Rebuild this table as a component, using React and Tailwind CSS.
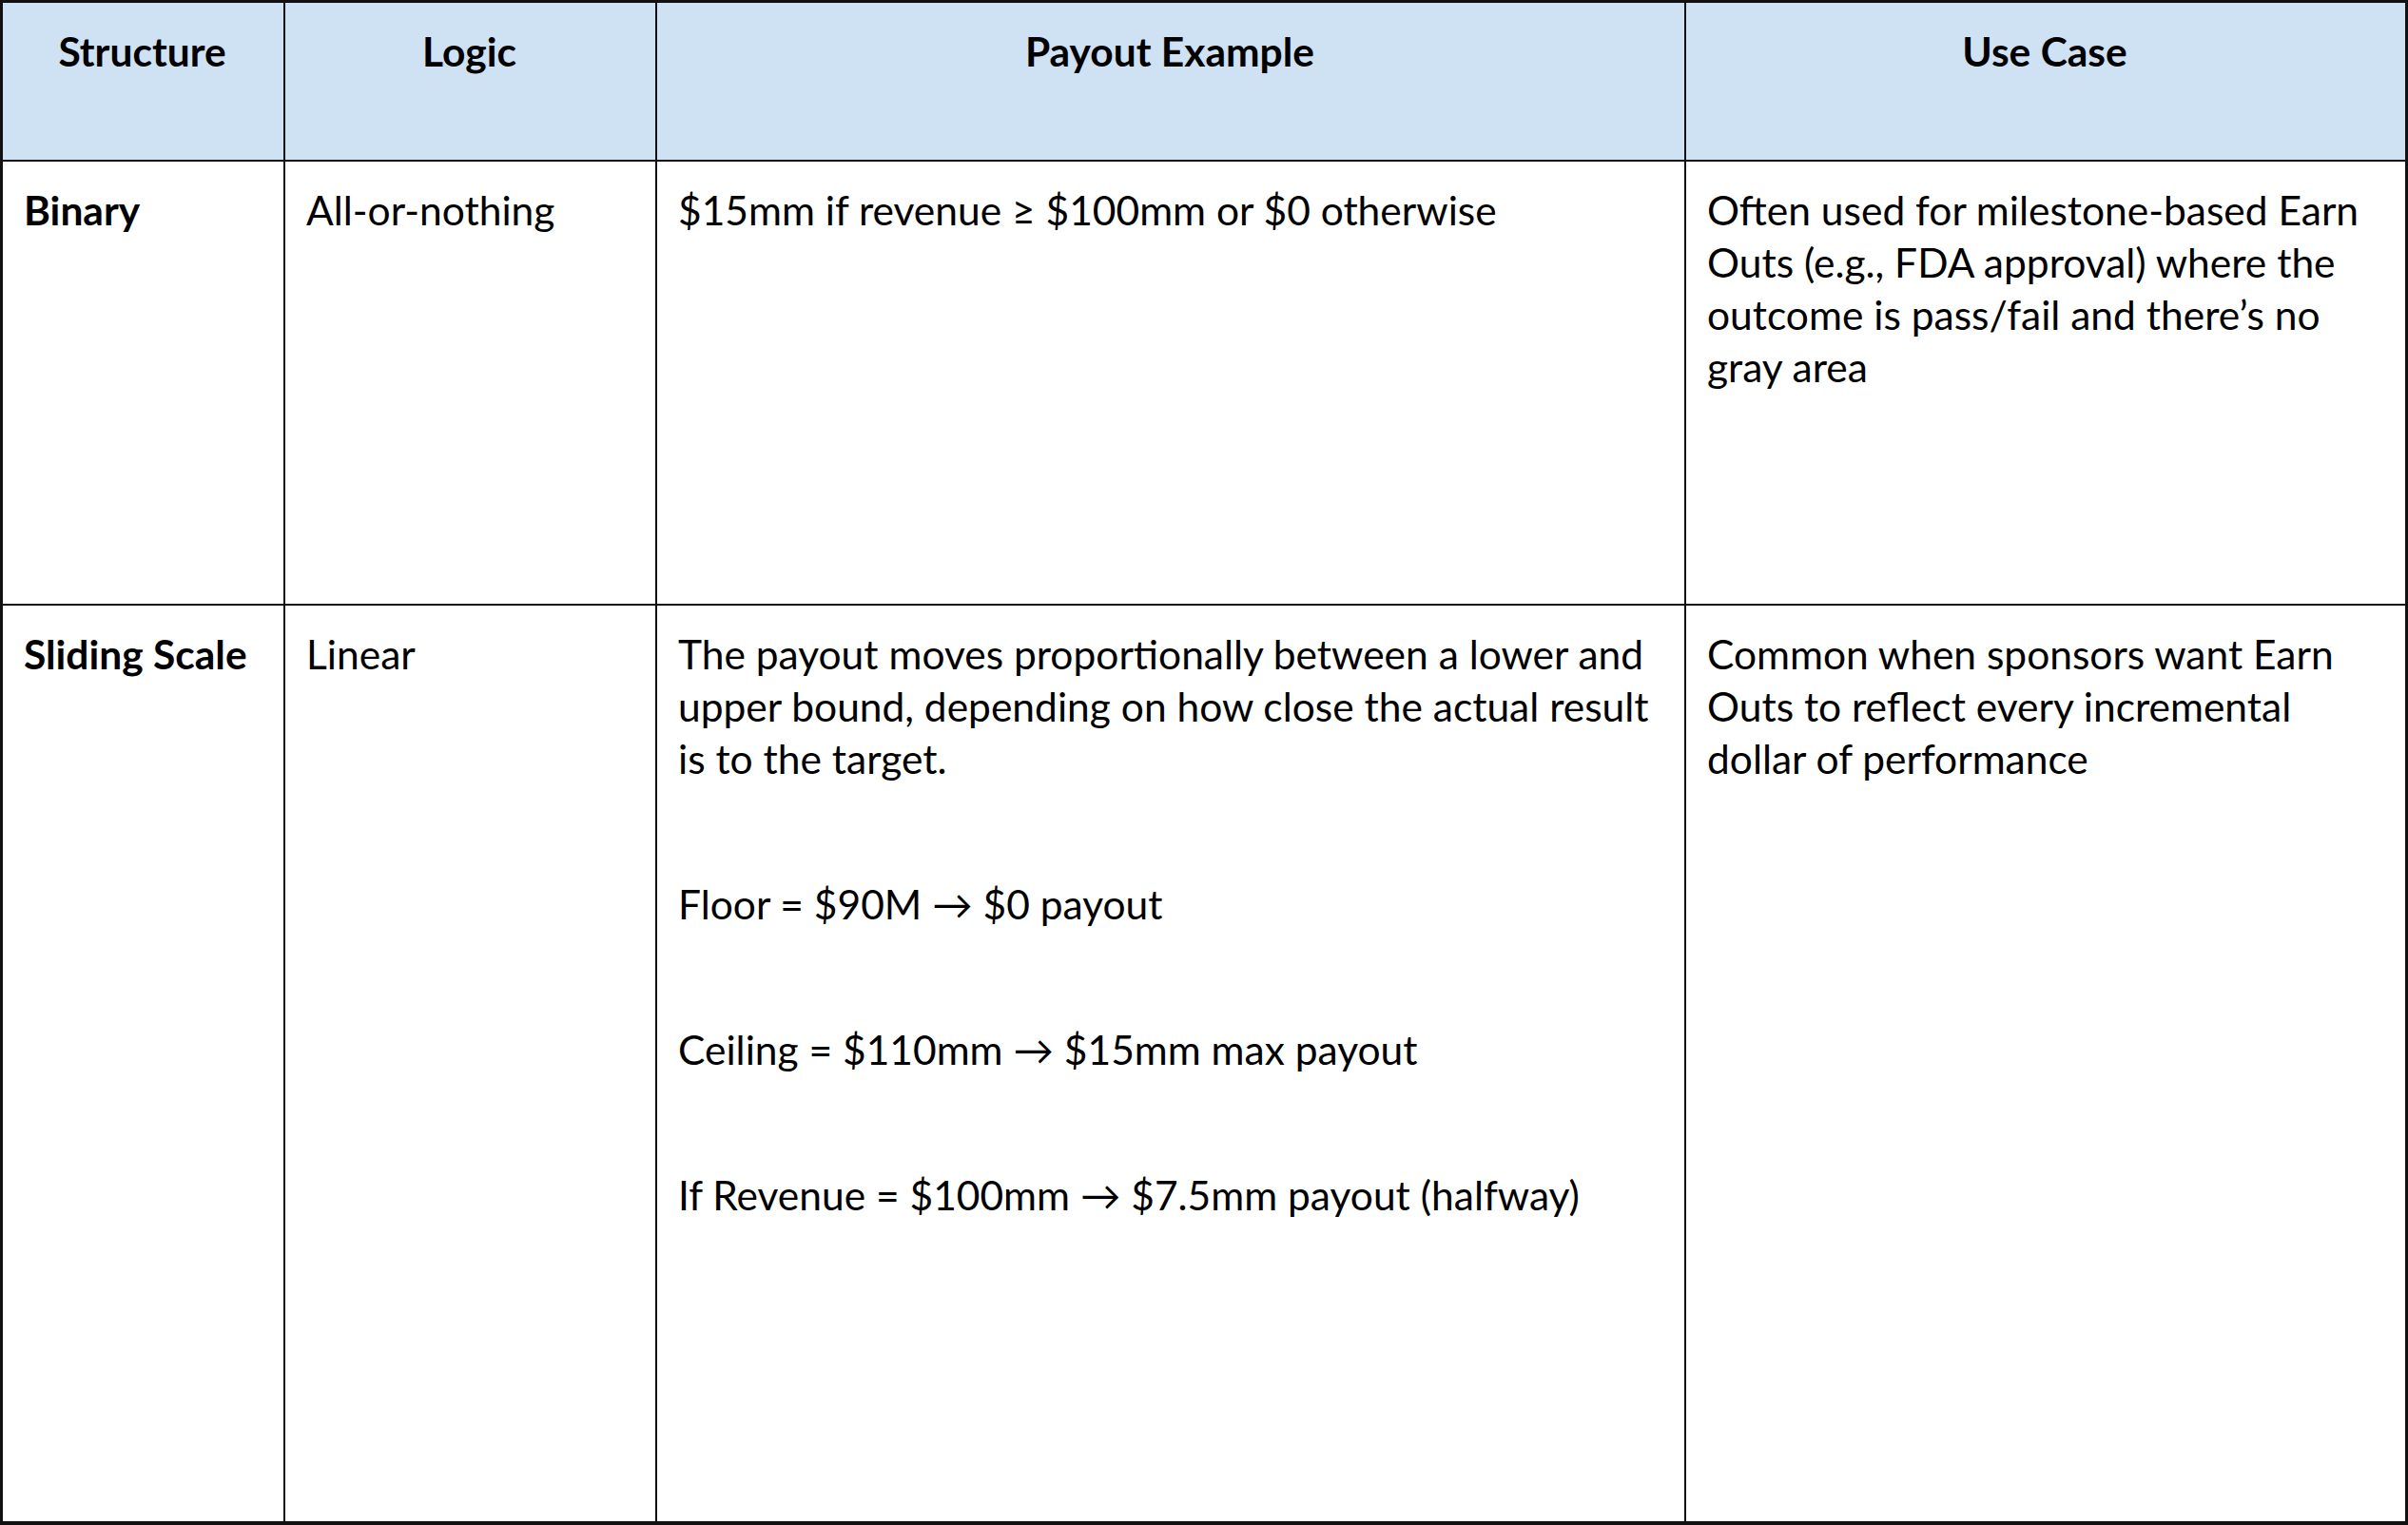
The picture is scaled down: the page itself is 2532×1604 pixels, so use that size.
import React from 'react';

const cell = "border-r-2 border-b-2 border-[#111] pl-[22px] pr-[24px] pt-[23px] min-w-0";

export default function App() {
    return (
        <div className="w-[2532px] h-[1604px] bg-white text-black text-[42.5px] leading-[55px] font-['Lato','Liberation_Sans',sans-serif]">
            <div className="grid grid-cols-[297px_391px_1082px_minmax(0,1fr)] grid-rows-[167px_467px_1fr] h-full border-t-[3px] border-l-[3px] border-r-[1px] border-b-[2px] border-[#111]">
                {/* Header */}
                <div className={`${cell} bg-[#cfe2f3] font-bold text-center`}>Structure</div>
                <div className={`${cell} bg-[#cfe2f3] font-bold text-center`}>Logic</div>
                <div className={`${cell} bg-[#cfe2f3] font-bold text-center`}>Payout Example</div>
                <div className={`${cell} bg-[#cfe2f3] font-bold text-center`}>Use Case</div>

                {/* Binary */}
                <div className={`${cell} font-bold`}>Binary</div>
                <div className={cell}>All-or-nothing</div>
                <div className={cell}>$15mm if revenue ≥ $100mm or $0 otherwise</div>
                <div className={cell}>
                    <p className="whitespace-nowrap">Often used for milestone-based Earn</p>
                    <p className="whitespace-nowrap">Outs (e.g., FDA approval) where the</p>
                    <p className="whitespace-nowrap">outcome is pass/fail and there’s no</p>
                    <p className="whitespace-nowrap">gray area</p>
                </div>

                {/* Sliding scale */}
                <div className={`${cell} font-bold whitespace-nowrap`}>Sliding Scale</div>
                <div className={cell}>Linear</div>
                <div className={`${cell} flex flex-col gap-[98px]`}>
                    <div>
                        <p className="whitespace-nowrap">The payout moves proportionally between a lower and</p>
                        <p className="whitespace-nowrap">upper bound, depending on how close the actual result</p>
                        <p className="whitespace-nowrap">is to the target.</p>
                    </div>
                    <p className="whitespace-nowrap">Floor = $90M → $0 payout</p>
                    <p className="whitespace-nowrap">Ceiling = $110mm → $15mm max payout</p>
                    <p className="whitespace-nowrap">If Revenue = $100mm → $7.5mm payout (halfway)</p>
                </div>
                <div className={cell}>
                    <p className="whitespace-nowrap">Common when sponsors want Earn</p>
                    <p className="whitespace-nowrap">Outs to reflect every incremental</p>
                    <p className="whitespace-nowrap">dollar of performance</p>
                </div>
            </div>
        </div>
    );
}
